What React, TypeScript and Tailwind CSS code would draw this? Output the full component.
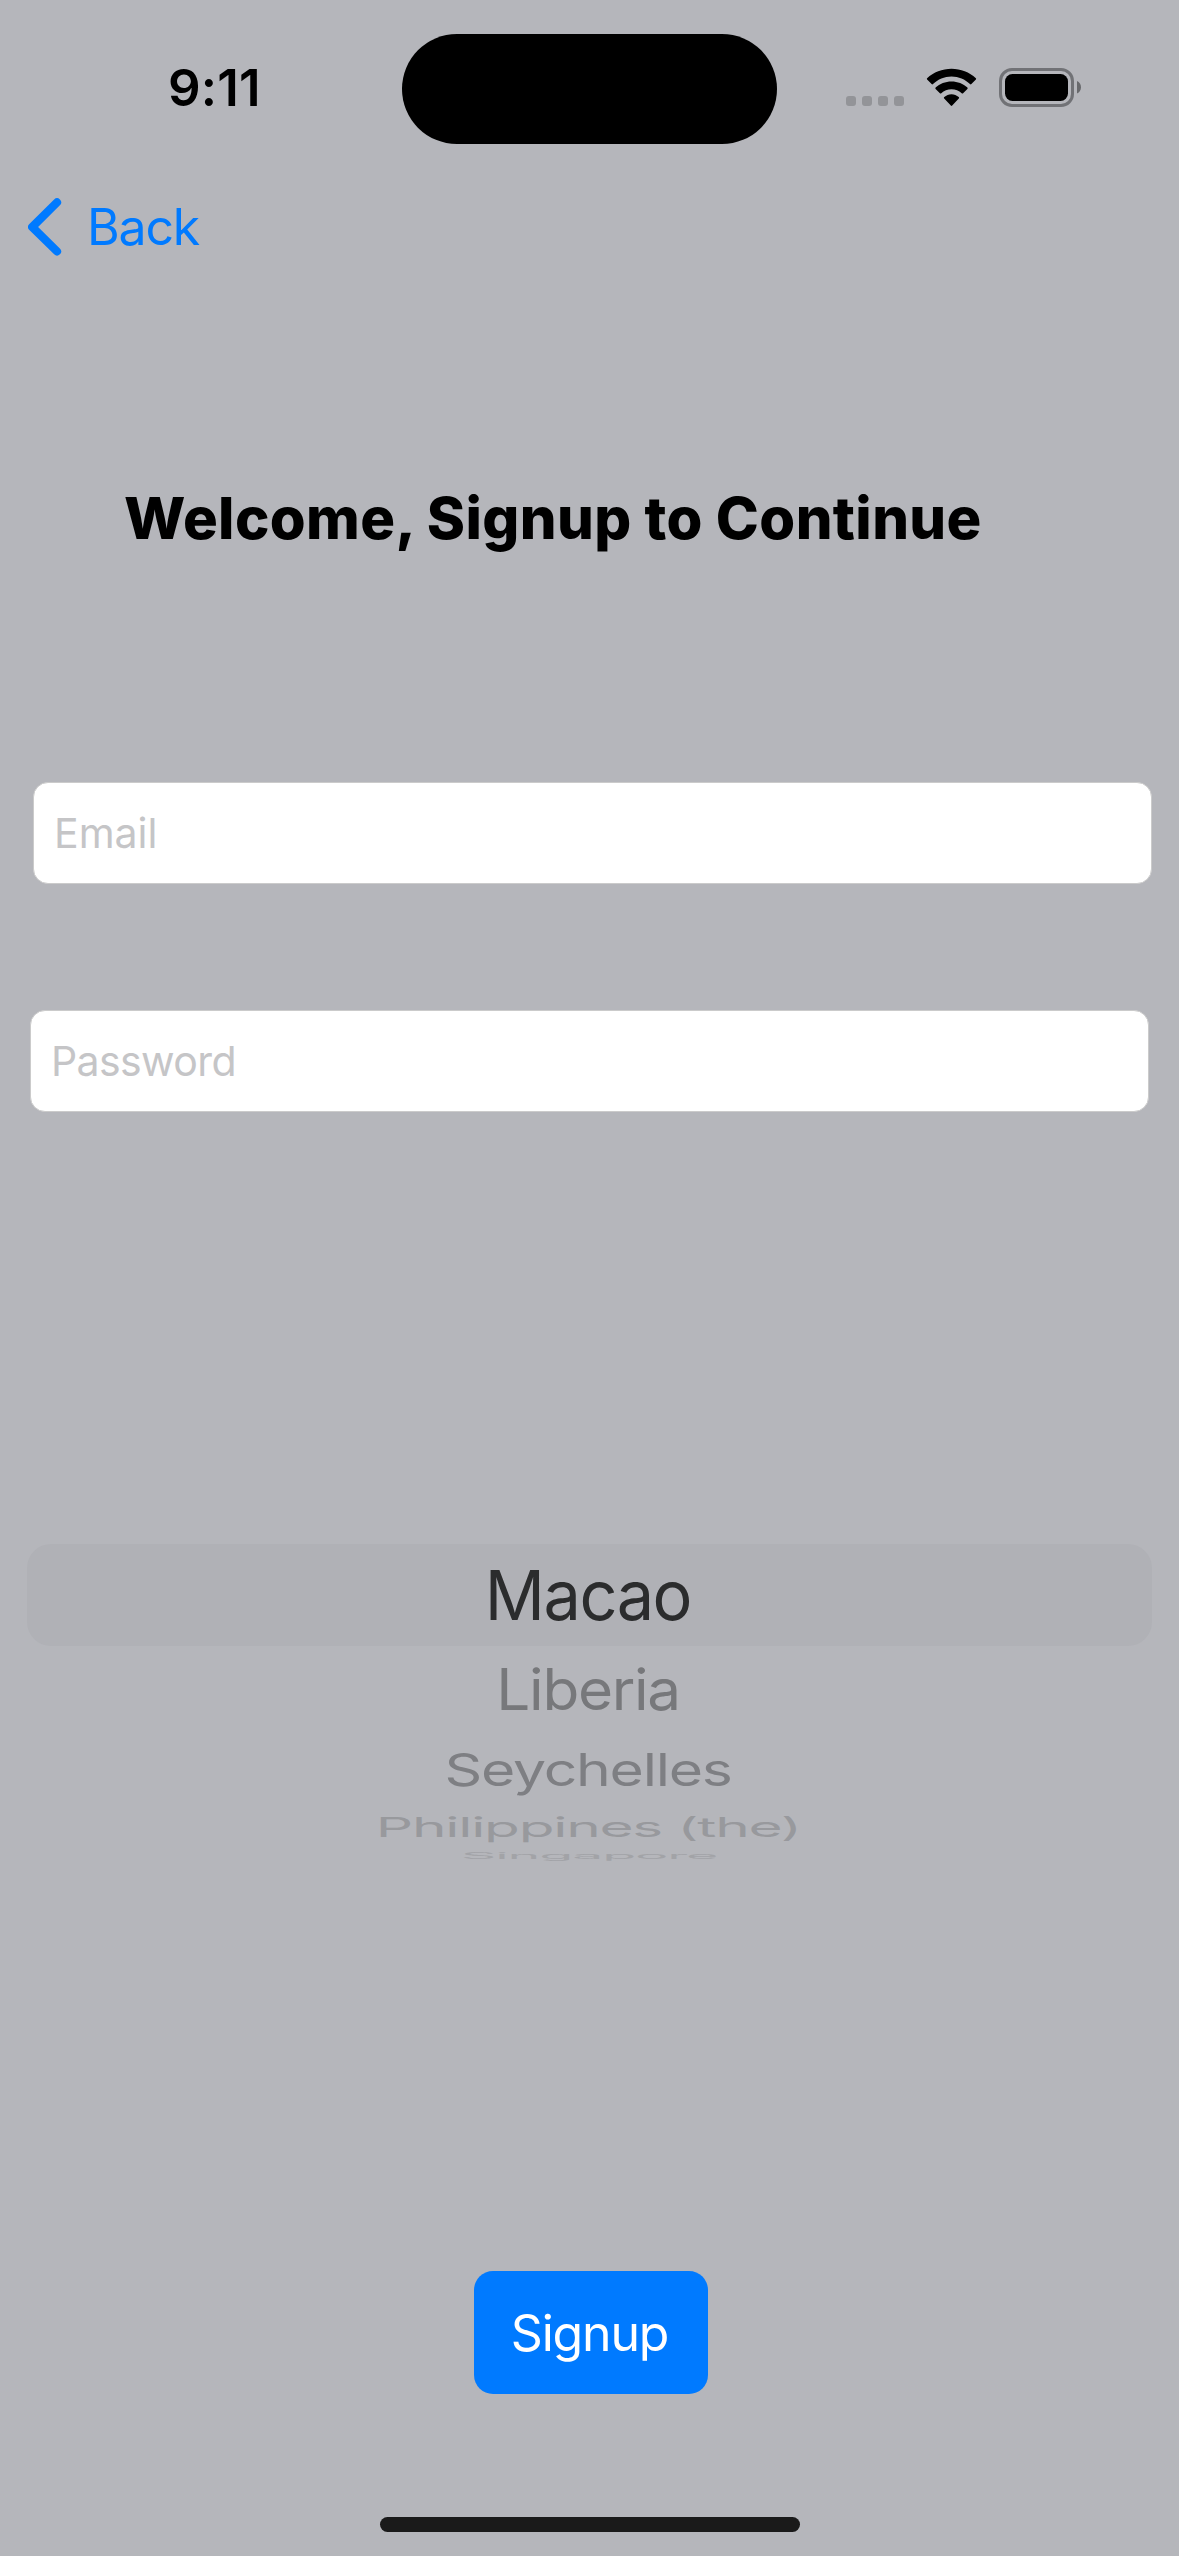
function StatusBar() {
  return (
    <header className="flex h-[177px] items-start">
      <div className="ml-[168px] mt-[63px] w-[234px] whitespace-nowrap text-[51px] font-semibold leading-[50px] tracking-[0.2px]">
        9:11
      </div>
      <div className="mt-[33.5px] h-[110.5px] w-[375px] rounded-[55px] bg-black" />
      <div className="ml-[69px] mt-24 flex gap-1.5">
        <span className="size-2.5 rounded-[3px] bg-[#939498]" />
        <span className="size-2.5 rounded-[3px] bg-[#939498]" />
        <span className="size-2.5 rounded-[3px] bg-[#939498]" />
        <span className="size-2.5 rounded-[3px] bg-[#939498]" />
      </div>
      <svg className="ml-[22px] mt-[68px] h-[39px] w-[51px]" viewBox="0 0 51 39" fill="black">
        <path d="M25.5 8.5C32.6 8.5 39.2 11.3 44 16.1C44.4 16.5 45 16.5 45.4 16.1L49.9 11.6C50.3 11.2 50.3 10.6 49.9 10.2C43.4 4.3 34.8 0.8 25.5 0.8C16.2 0.8 7.6 4.3 1.1 10.2C0.7 10.6 0.7 11.2 1.1 11.6L5.6 16.1C6 16.5 6.6 16.5 7 16.1C11.8 11.3 18.4 8.5 25.5 8.5Z" />
        <path d="M25.5 21.2C29.4 21.2 33 22.7 35.7 25.2C36.1 25.6 36.7 25.6 37.1 25.2L41.4 20.9C41.8 20.5 41.8 19.9 41.4 19.5C37.2 15.8 31.6 13.5 25.5 13.5C19.4 13.5 13.8 15.8 9.6 19.5C9.2 19.9 9.2 20.5 9.6 20.9L13.9 25.2C14.3 25.6 14.9 25.6 15.3 25.2C18 22.7 21.6 21.2 25.5 21.2Z" />
        <path d="M26.2 37.6L32.8 30.6C33.2 30.2 33.2 29.5 32.7 29.1C30.7 27.2 28.2 26.2 25.5 26.2C22.8 26.2 20.3 27.2 18.3 29.1C17.8 29.5 17.8 30.2 18.2 30.6L24.8 37.6C25.2 38 25.8 38 26.2 37.6Z" />
      </svg>
      <svg className="ml-[22px] mt-[68px] h-[39px] w-[83px]" viewBox="0 0 83 39">
        <rect x="1.5" y="1.5" width="72" height="36" rx="11.5" fill="none" stroke="#717276" strokeWidth="3" />
        <rect x="6" y="6" width="63" height="27" rx="7.5" fill="black" />
        <path d="M78 13C80.5 14.1 82 16.6 82 19.3C82 22 80.5 24.5 78 25.6Z" fill="#68696c" />
      </svg>
    </header>
  );
}

function BackLink() {
  return (
    <nav className="flex h-[100px] items-center text-[#007aff]">
      <svg className="ml-7 h-[58px] w-[34px]" viewBox="0 0 34 58" fill="none">
        <path d="M29 4.4L4.2 29L29 53.4" stroke="currentColor" strokeWidth="8.2" strokeLinecap="round" strokeLinejoin="round" />
      </svg>
      <span className="ml-[25px] whitespace-nowrap text-[50px] leading-[50px] tracking-[-1.2px]">Back</span>
    </nav>
  );
}

function Field({ placeholder, className }: { placeholder: string; className: string }) {
  return (
    <div
      className={`flex h-[102px] w-[1119px] items-center rounded-[15px] border border-[#cbcbcb] bg-white pl-5 text-[41px] leading-[42px] text-[#c5c5c7] ${className}`}
    >
      {placeholder}
    </div>
  );
}

const rowBase = 'flex items-center justify-center overflow-visible whitespace-nowrap';

function CountryPicker() {
  return (
    <section className="mt-[432px] text-[69px] leading-[1] tracking-[-1.5px]">
      <div className={`${rowBase} mx-[27px] h-[102px] rounded-[24px] bg-[#b0b1b6] text-[#2b2c2d]`}>
        <span className="-translate-x-0.5 scale-x-[0.965]">Macao</span>
      </div>
      <div className={`${rowBase} h-[87px] text-[#77787b]`}>
        <span className="-translate-x-px scale-x-[0.873] scale-y-[0.826]">Liberia</span>
      </div>
      <div className={`${rowBase} h-[74px] text-[#7e7f83]`}>
        <span className="-translate-x-px scale-x-[0.854] scale-y-[0.648]">Seychelles</span>
      </div>
      <div className={`${rowBase} h-[41px] text-[#98999d]`}>
        <span className="-translate-x-px scale-x-[0.849] scale-y-[0.4]">Philippines (the)</span>
      </div>
      <div className={`${rowBase} h-4 text-[#a2a3a7]`}>
        <span className="-translate-x-px -translate-y-px scale-x-[0.807] scale-y-[0.13]">Singapore</span>
      </div>
    </section>
  );
}

export default function App() {
  return (
    <main className="flex h-[2556px] w-[1179px] flex-col overflow-hidden bg-[#b5b6bb] font-['Inter',sans-serif] text-black">
      <StatusBar />
      <BackLink />
      <h1 className="ml-[124px] mt-[205px] whitespace-nowrap text-[58px] font-extrabold leading-[72px] tracking-[0.37px]">
        Welcome, Signup to Continue
      </h1>
      <Field placeholder="Email" className="ml-[33px] mt-[228px]" />
      <Field placeholder="Password" className="ml-[30px] mt-[126px] tracking-[-0.6px]" />
      <CountryPicker />
      <button className="mt-[407px] ml-[474px] flex h-[123px] w-[234px] items-center justify-center rounded-[19px] bg-[#007aff] pr-[3px] text-[50px] leading-[50px] tracking-[-1.2px] text-white">
        Signup
      </button>
      <div className="mx-auto mt-[123px] h-[15px] w-[420px] rounded-full bg-[#1a1a1a]" />
    </main>
  );
}
